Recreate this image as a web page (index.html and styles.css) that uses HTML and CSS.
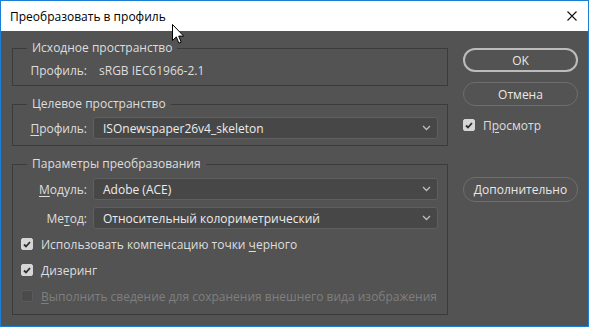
FILE: index.html
```html
<!DOCTYPE html>
<html lang="ru">
<head>
    <meta charset="UTF-8">
    <title>Преобразовать в профиль</title>
    <link rel="stylesheet" href="styles.css">
</head>
<body>

<div class="window">
    <div class="titlebar">
        <span class="title">Преобразовать в профиль</span>
        <svg class="close" width="10" height="10" viewBox="0 0 10 10">
            <path d="M0.5 0.5 L9.5 9.5 M9.5 0.5 L0.5 9.5" stroke="#111" stroke-width="1.1" fill="none"/>
        </svg>
    </div>

    <div class="dialog">
        <div class="main">
            <fieldset class="group group-source">
                <legend>Исходное пространство</legend>
                <div class="row">
                    <span class="label">Профиль:</span>
                    <span class="value">sRGB IEC61966-2.1</span>
                </div>
            </fieldset>

            <fieldset class="group">
                <legend>Целевое пространство</legend>
                <div class="row">
                    <span class="label"><u>П</u>рофиль:</span>
                    <div class="select">
                        <span>ISOnewspaper26v4_skeleton</span>
                        <svg width="9" height="6" viewBox="0 0 9 6"><path d="M1 1 L4.5 4.5 L8 1" stroke="#bdbdbd" stroke-width="1.3" fill="none"/></svg>
                    </div>
                </div>
            </fieldset>

            <fieldset class="group group-params">
                <legend>Параметры преобразования</legend>
                <div class="row">
                    <span class="label"><u>М</u>одуль:</span>
                    <div class="select">
                        <span>Adobe (ACE)</span>
                        <svg width="9" height="6" viewBox="0 0 9 6"><path d="M1 1 L4.5 4.5 L8 1" stroke="#bdbdbd" stroke-width="1.3" fill="none"/></svg>
                    </div>
                </div>
                <div class="row">
                    <span class="label">Ме<u>т</u>од:</span>
                    <div class="select">
                        <span>Относительный колориметрический</span>
                        <svg width="9" height="6" viewBox="0 0 9 6"><path d="M1 1 L4.5 4.5 L8 1" stroke="#bdbdbd" stroke-width="1.3" fill="none"/></svg>
                    </div>
                </div>
                <label class="check check-first">
                    <span class="box checked"><svg width="8" height="7" viewBox="0 0 8 7"><path d="M1 3.5 L3 5.5 L7 1" stroke="#2e2e2e" stroke-width="1.8" fill="none"/></svg></span>
                    <span>Использовать компенсацию точки <u>ч</u>ерного</span>
                </label>
                <label class="check">
                    <span class="box checked"><svg width="8" height="7" viewBox="0 0 8 7"><path d="M1 3.5 L3 5.5 L7 1" stroke="#2e2e2e" stroke-width="1.8" fill="none"/></svg></span>
                    <span><u>Д</u>изеринг</span>
                </label>
                <label class="check disabled">
                    <span class="box"></span>
                    <span><u>В</u>ыполнить сведение для сохранения внешнего вида изображения</span>
                </label>
            </fieldset>
        </div>

        <div class="side">
            <button class="btn btn-default">OK</button>
            <button class="btn btn-cancel">Отмена</button>
            <label class="check check-preview">
                <span class="box checked"><svg width="8" height="7" viewBox="0 0 8 7"><path d="M1 3.5 L3 5.5 L7 1" stroke="#2e2e2e" stroke-width="1.8" fill="none"/></svg></span>
                <span>П<u>р</u>осмотр</span>
            </label>
            <button class="btn btn-more">Дополнительно</button>
        </div>
    </div>

    <svg class="cursor" width="13" height="21" viewBox="0 0 13 21">
        <path d="M0.5 0.5 V16.5 L4.3 12.9 L6.9 19.2 L9.2 18.2 L6.7 12.1 H11.7 Z" fill="#fff" stroke="#000" stroke-width="1" stroke-linejoin="miter"/>
    </svg>
</div>

</body>
</html>
```

FILE: styles.css
```css
/* Janela */
body {
    margin: 0;
    font-family: "Open Sans", "Noto Sans", sans-serif;
    font-size: 12px;
}

.window {
    position: relative;
    width: 589px;
    height: 327px;
    box-sizing: border-box;
    border: 1px solid #1a7fd5;
    display: flex;
    flex-direction: column;
    overflow: hidden;
}

.titlebar {
    height: 30px;
    background-color: #ffffff;
    display: flex;
    align-items: center;
    justify-content: space-between;
    padding-left: 9px;
    flex-shrink: 0;
}

.title {
    color: #000000;
    font-size: 12px;
}

.close {
    margin-right: 11px;
}

.cursor {
    position: absolute;
    left: 171px;
    top: 23px;
}

/* Corpo do dialogo */
.dialog {
    flex: 1;
    background-color: #535353;
    display: flex;
    gap: 15px;
    padding: 9px 10px 0 11px;
    color: #dedede;
}

.main {
    width: 436px;
    display: flex;
    flex-direction: column;
    gap: 10px;
}

/* Grupos */
.group {
    margin: 0;
    min-width: 0;
    border: 1px solid #3b3b3b;
    padding: 5px 9px 6px 8px;
}

.group legend {
    margin-left: 6px;
    padding: 0 5px;
    line-height: 16px;
    color: #dedede;
}

.group-source {
    padding-top: 3px;
    padding-bottom: 4px;
}

.group-params {
    padding-top: 6px;
    padding-bottom: 7px;
}

.group-params .row + .row {
    margin-top: 7px;
}

.row {
    display: grid;
    grid-template-columns: 66px 1fr;
    column-gap: 6px;
    align-items: center;
    height: 22px;
}

.label {
    text-align: right;
    white-space: nowrap;
}

.value {
    padding-left: 6px;
}

u {
    text-decoration-thickness: 1px;
    text-underline-offset: 2px;
}

/* Lista suspensa */
.select {
    height: 22px;
    box-sizing: border-box;
    border: 1px solid #5f5f5f;
    border-radius: 3px;
    background-color: #474747;
    display: flex;
    align-items: center;
    justify-content: space-between;
    padding: 0 6px 0 9px;
    color: #ececec;
}

/* Caixas de selecao */
.check {
    display: flex;
    align-items: center;
    gap: 8px;
    height: 22px;
    margin-top: 4px;
    white-space: nowrap;
}

.check-first {
    margin-top: 4px;
}

.box {
    width: 12px;
    height: 12px;
    box-sizing: border-box;
    border-radius: 2px;
    background-color: #4b4b4b;
    border: 1px solid #5a5a5a;
    display: flex;
    align-items: center;
    justify-content: center;
    flex-shrink: 0;
}

.box.checked {
    background-color: #d6d6d6;
    border-color: #d6d6d6;
}

.disabled {
    color: #7f7f7f;
}

/* Botoes */
.side {
    width: 115px;
    display: flex;
    flex-direction: column;
    padding-top: 8px;
}

.btn {
    height: 24px;
    border-radius: 12px;
    background-color: #535353;
    border: 1px solid #6e6e6e;
    color: #e8e8e8;
    font-family: inherit;
    font-size: 12px;
    padding: 0;
}

.btn-default {
    border: 2px solid #bcbcbc;
}

.btn-cancel {
    margin-top: 10px;
}

.check-preview {
    margin-top: 8px;
}

.btn-more {
    margin-top: 41px;
    height: 25px;
}
```
